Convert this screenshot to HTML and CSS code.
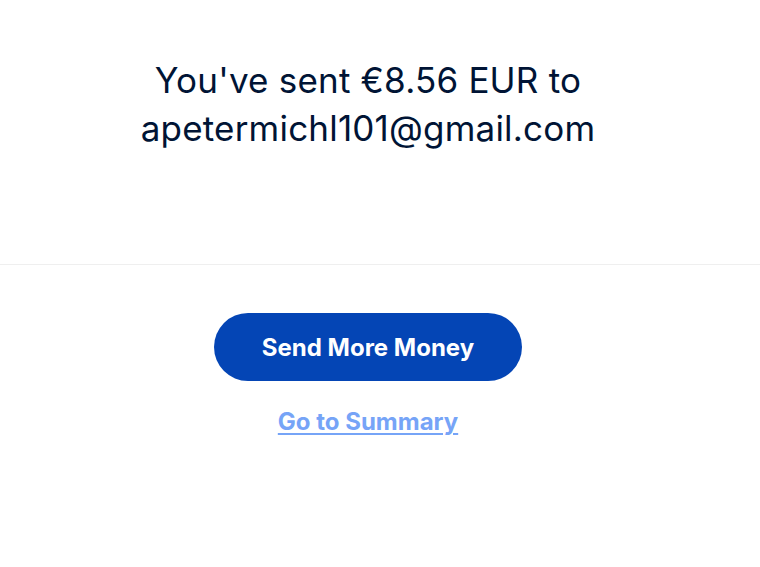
FILE: index.html
```html
<!DOCTYPE html>
<html>
<head>
<meta charset="utf-8">
<link rel="stylesheet" href="styles.css">
</head>
<body>
  <section class="top">
    <h1 class="title">You've sent €8.56 EUR to<br>apetermichl101@gmail.com</h1>
  </section>
  <hr class="divider">
  <section class="actions">
    <a class="btn" href="#">Send More Money</a>
    <a class="link" href="#">Go to Summary</a>
  </section>
</body>
</html>
```

FILE: styles.css
```css
html, body {
  margin: 0;
  padding: 0;
  background: #ffffff;
}
body {
  font-family: Inter, "Noto Sans", sans-serif;
  width: 760px;
}
.top {
  width: 736px;
  padding-top: 56px;
  height: 206px;
  box-sizing: border-box;
  text-align: center;
}
.title {
  margin: 0;
  font-size: 35px;
  font-weight: 400;
  line-height: 48px;
  color: #001435;
  letter-spacing: 0.2px;
}
.divider {
  margin: 58px 0 0 0;
  border: 0;
  height: 1px;
  background: #efefef;
}
.actions {
  width: 736px;
  display: flex;
  flex-direction: column;
  align-items: center;
  padding-top: 48px;
}
.btn {
  width: 308px;
  height: 68px;
  border-radius: 34px;
  background: #0445b5;
  color: #ffffff;
  font-weight: 700;
  font-size: 24px;
  text-decoration: none;
  display: flex;
  align-items: center;
  justify-content: center;
}
.link {
  margin-top: 26px;
  font-size: 24px;
  font-weight: 700;
  color: #76a4f7;
  text-decoration: underline;
  text-underline-offset: 3px;
  text-decoration-thickness: 2px;
}
```
